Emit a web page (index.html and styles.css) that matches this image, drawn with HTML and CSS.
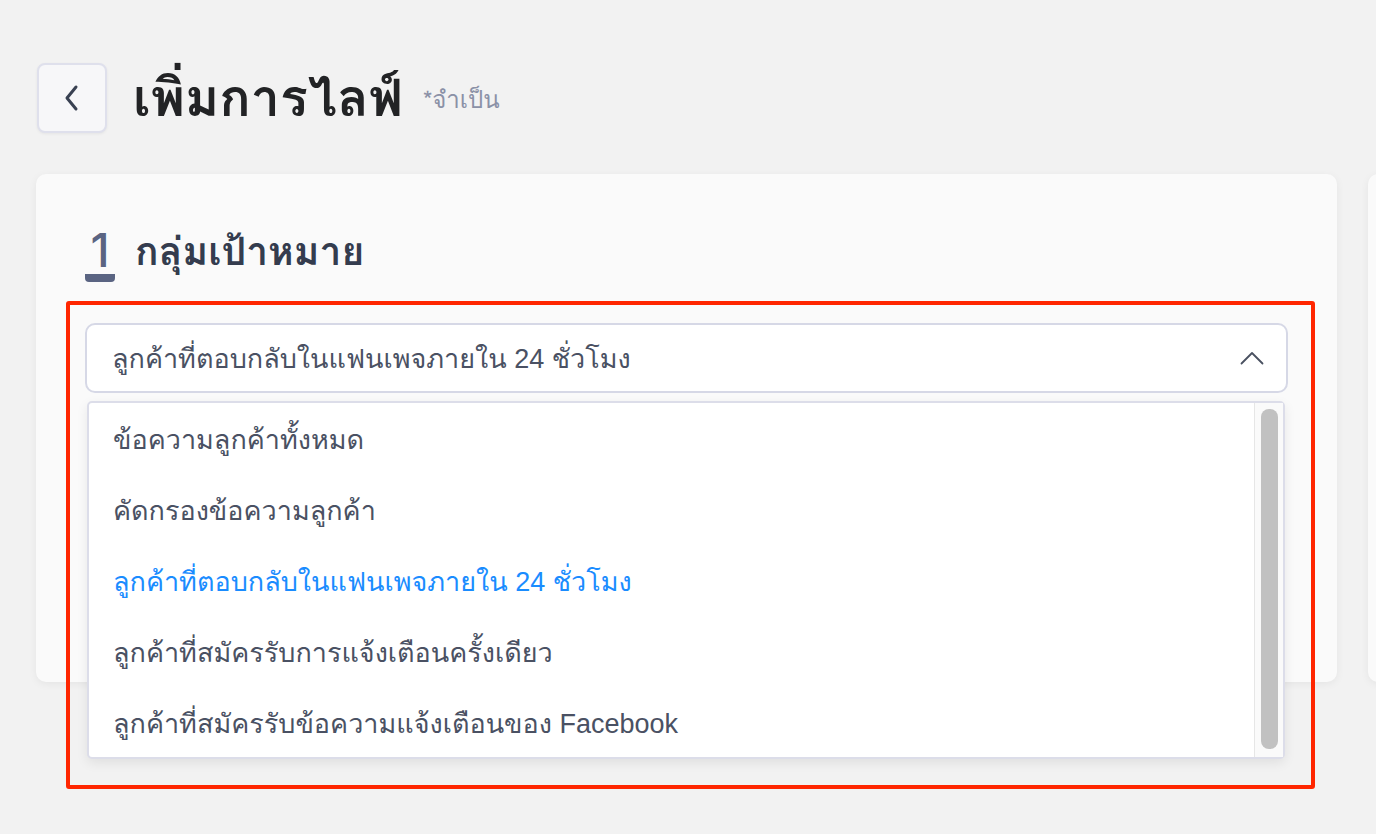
FILE: index.html
```html
<!doctype html>
<html lang="th">
<head>
    <meta charset="UTF-8">
    <title>เพิ่มการไลฟ์</title>

    <link rel="stylesheet" href="styles.css">
</head>
<body>

<div class="page">

    <div class="page-header">
        <button class="back-btn" type="button">
            <svg width="24" height="30" viewBox="0 0 24 30" fill="none">
                <path d="M16 4 L7 15 L16 26" stroke="#394152" stroke-width="3" stroke-linecap="round" stroke-linejoin="round"/>
            </svg>
        </button>
        <h1 class="page-title">เพิ่มการไลฟ์</h1>
        <span class="page-required">*จำเป็น</span>
    </div>

    <div class="cards">

        <div class="card">
            <div class="section-head">
                <span class="section-num">1</span>
                <h2 class="section-title">กลุ่มเป้าหมาย</h2>
            </div>

            <div class="select-wrapper">
                <div class="fake-select">
                    <span class="fake-select__value">ลูกค้าที่ตอบกลับในแฟนเพจภายใน 24 ชั่วโมง</span>
                    <svg class="fake-select__arrow" width="24" height="14" viewBox="0 0 24 14" fill="none">
                        <path d="M1.5 12.5 L12 2 L22.5 12.5" stroke="#4a5161" stroke-width="1.8" stroke-linecap="round" stroke-linejoin="round"/>
                    </svg>
                </div>

                <div class="fake-select__dropdown">
                    <div class="fake-select__list">
                        <div class="fake-select__option">ข้อความลูกค้าทั้งหมด</div>
                        <div class="fake-select__option">คัดกรองข้อความลูกค้า</div>
                        <div class="fake-select__option is-active">ลูกค้าที่ตอบกลับในแฟนเพจภายใน 24 ชั่วโมง</div>
                        <div class="fake-select__option">ลูกค้าที่สมัครรับการแจ้งเตือนครั้งเดียว</div>
                        <div class="fake-select__option">ลูกค้าที่สมัครรับข้อความแจ้งเตือนของ Facebook</div>
                    </div>
                    <div class="fake-select__track">
                        <div class="fake-select__thumb"></div>
                    </div>
                </div>
            </div>

            <div class="highlight"></div>
        </div>

        <div class="card card--next"></div>

    </div>

</div>

</body>
</html>
```

FILE: styles.css
```css
* {
    margin: 0;
    padding: 0;
    box-sizing: border-box;
}

body {
    background: #f2f2f2;
    font-family: "Liberation Sans", "Loma", "Noto Sans Thai Looped", sans-serif;
    color: #4a5163;
}

.page {
    height: 834px;
    padding: 63px 0 0 36px;
    overflow: hidden;
}

.page-header {
    display: flex;
    align-items: center;
    height: 70px;
}

.back-btn {
    width: 70px;
    height: 70px;
    margin-left: 1px;
    display: flex;
    align-items: center;
    justify-content: center;
    background: #f7f7f9;
    border: 2px solid #dfe0ec;
    border-radius: 8px;
    box-shadow: 0 1px 3px rgba(0, 0, 0, 0.06);
    cursor: pointer;
}

.page-title {
    margin-left: 26px;
    font-family: "Loma", "Noto Sans Thai Looped", sans-serif;
    font-size: 52px;
    font-weight: 700;
    color: #222325;
    line-height: 1;
}

.page-required {
    margin-left: 20px;
    margin-top: 2px;
    font-family: "Loma", sans-serif;
    font-size: 24px;
    color: #8b91a7;
}

.cards {
    display: flex;
    gap: 31px;
    margin-top: 41px;
}

.card {
    position: relative;
    flex: none;
    width: 1301px;
    height: 508px;
    padding: 58px 49px 0;
    background: #fafafa;
    border-radius: 10px;
    box-shadow: 0 2px 8px rgba(0, 0, 0, 0.06);
}

.card--next {
    width: 400px;
}

.section-head {
    display: flex;
    align-items: flex-start;
    height: 56px;
}

.section-num {
    display: block;
    width: 30px;
    padding: 0 1px 5px;
    border-bottom: 8px solid #5a6482;
    border-radius: 0 0 4px 4px;
    font-family: "Inter", sans-serif;
    font-size: 46px;
    font-weight: 500;
    line-height: 37px;
    color: #5a6482;
    text-align: center;
}

.section-title {
    margin-left: 20px;
    margin-top: -4px;
    font-family: "Loma", "Noto Sans Thai Looped", sans-serif;
    font-size: 39px;
    font-weight: 700;
    line-height: 46px;
    color: #343c4e;
}

.select-wrapper {
    position: relative;
    margin-top: 35px;
}

.fake-select {
    display: flex;
    align-items: center;
    justify-content: space-between;
    height: 70px;
    padding: 0 22px 0 25px;
    background: #fff;
    border: 2px solid #d6d8e6;
    border-radius: 10px;
}

.fake-select__value {
    font-size: 27px;
    color: #4a5163;
}

.fake-select__dropdown {
    position: absolute;
    top: 78px;
    left: 2px;
    width: 1198px;
    height: 358px;
    display: flex;
    background: #fff;
    border: 2px solid #dcdde9;
    border-radius: 5px;
    box-shadow: 0 4px 12px rgba(0, 0, 0, 0.08);
    z-index: 2;
}

.fake-select__list {
    flex: 1;
    padding-top: 1px;
}

.fake-select__option {
    display: flex;
    align-items: center;
    height: 71px;
    padding-left: 24px;
    font-size: 27px;
    color: #4a5163;
}

.fake-select__option.is-active {
    color: #1a8cff;
}

.fake-select__track {
    width: 29px;
    padding: 6px 5px 8px 6px;
    background: #fafafa;
    border-left: 1px solid #e6e6e6;
}

.fake-select__thumb {
    height: 100%;
    background: #c1c1c1;
    border-radius: 8px;
}

.highlight {
    position: absolute;
    left: 30px;
    top: 127px;
    width: 1249px;
    height: 488px;
    border: 4px solid #ff2600;
    border-radius: 3px;
    z-index: 3;
    pointer-events: none;
}
```
